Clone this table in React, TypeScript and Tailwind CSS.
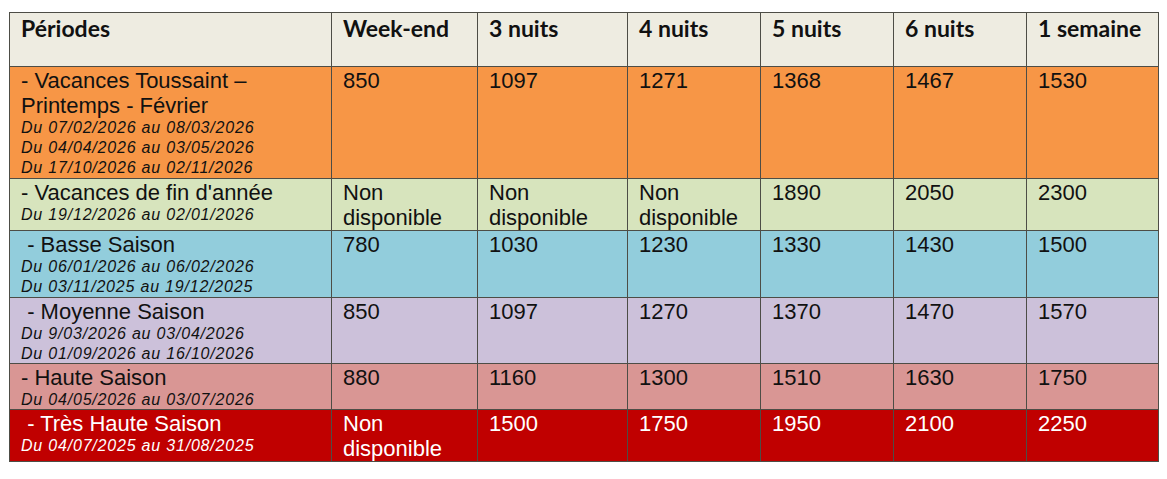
const headers = ["Périodes", "Week-end", "3 nuits", "4 nuits", "5 nuits", "6 nuits", "1 semaine"];

type Periode = {
    label: string;
    dates: string[];
    prix: string[];
    bg: string;
    text: string;
};

const periodes: Periode[] = [
    {
        label: "- Vacances Toussaint – Printemps - Février",
        dates: ["Du 07/02/2026 au 08/03/2026", "Du 04/04/2026 au 03/05/2026", "Du 17/10/2026 au 02/11/2026"],
        prix: ["850", "1097", "1271", "1368", "1467", "1530"],
        bg: "bg-[#f79646]",
        text: "text-[#111]",
    },
    {
        label: "- Vacances de fin d'année",
        dates: ["Du 19/12/2026 au 02/01/2026"],
        prix: ["Non disponible", "Non disponible", "Non disponible", "1890", "2050", "2300"],
        bg: "bg-[#d7e4bd]",
        text: "text-[#111]",
    },
    {
        label: " - Basse Saison",
        dates: ["Du 06/01/2026 au 06/02/2026", "Du 03/11/2025 au 19/12/2025"],
        prix: ["780", "1030", "1230", "1330", "1430", "1500"],
        bg: "bg-[#92cddc]",
        text: "text-[#111]",
    },
    {
        label: " - Moyenne Saison",
        dates: ["Du 9/03/2026 au 03/04/2026", "Du 01/09/2026 au 16/10/2026"],
        prix: ["850", "1097", "1270", "1370", "1470", "1570"],
        bg: "bg-[#ccc1da]",
        text: "text-[#111]",
    },
    {
        label: "- Haute Saison",
        dates: ["Du 04/05/2026 au 03/07/2026"],
        prix: ["880", "1160", "1300", "1510", "1630", "1750"],
        bg: "bg-[#d99694]",
        text: "text-[#111]",
    },
    {
        label: " - Très Haute Saison",
        dates: ["Du 04/07/2025 au 31/08/2025"],
        prix: ["Non disponible", "1500", "1750", "1950", "2100", "2250"],
        bg: "bg-[#c00000]",
        text: "text-white",
    },
];

function App() {
    return (
        <div className="w-[1167px] h-[479px] bg-white pt-[12px] pl-[9px]">
            <div className="w-[1150px] bg-[#4d4d46] p-px grid grid-cols-[321px_145px_149px_132px_132px_132px_131px] grid-rows-[53px_111px_51px_66px_65px_45px_51px] gap-px">
                { headers.map( (h) =>
                    <div key={h} className="bg-[#eeece1] pl-[11px] pt-[2px] text-[23px] leading-[26px] font-bold text-[#111]" style={{ fontFamily: "Lato, 'Open Sans', sans-serif" }}>
                        {h}
                    </div>
                )}

                { periodes.map( (p, index) =>
                    [
                        <div key={`l${index}`} className={`${p.bg} ${p.text} pl-[11px] pt-px`} style={{ fontFamily: "'Liberation Sans', Arial, sans-serif" }}>
                            <div className="text-[22px] leading-[25px] whitespace-pre-wrap">{p.label}</div>
                            { p.dates.map( (d) =>
                                <div key={d} className="text-[16px] leading-[20px] italic tracking-[0.8px]">{d}</div>
                            )}
                        </div>,
                        ...p.prix.map( (v, i) =>
                            <div key={`p${index}-${i}`} className={`${p.bg} ${p.text} pl-[11px] pr-[4px] pt-px text-[22px] leading-[25px]`} style={{ fontFamily: "'Liberation Sans', Arial, sans-serif" }}>
                                {v}
                            </div>
                        )
                    ]
                )}
            </div>
        </div>
    );
}

export default App;
